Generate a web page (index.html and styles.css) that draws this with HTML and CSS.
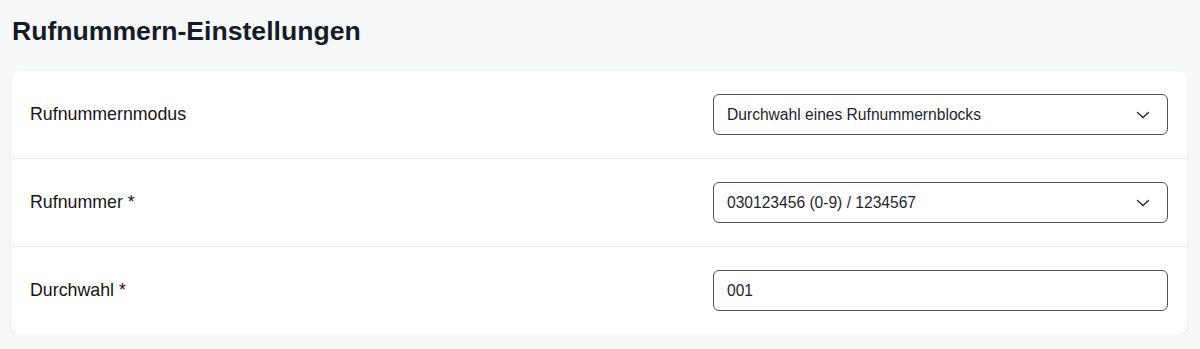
FILE: index.html
```html
<!DOCTYPE html>
<html lang="de">
  <head>
    <meta charset="UTF-8" />
    <meta name="viewport" content="width=device-width, initial-scale=1.0" />
    <title>Rufnummern-Einstellungen</title>
    <link rel="stylesheet" href="styles.css">
  </head>
  <body>
    <div class="page">
      <h1>Rufnummern-Einstellungen</h1>
      <div class="card">
        <div class="row">
          <label class="label">Rufnummernmodus</label>
          <div class="select">
            <span>Durchwahl eines Rufnummernblocks</span>
            <svg class="chevron" viewBox="0 0 14 8" width="14" height="8"><path d="M1.5 1.5l5.5 5 5.5-5" fill="none" stroke="#1f2937" stroke-width="1.4" stroke-linecap="round" stroke-linejoin="round"/></svg>
          </div>
        </div>
        <div class="row">
          <label class="label">Rufnummer *</label>
          <div class="select">
            <span>030123456 (0-9) / 1234567</span>
            <svg class="chevron" viewBox="0 0 14 8" width="14" height="8"><path d="M1.5 1.5l5.5 5 5.5-5" fill="none" stroke="#1f2937" stroke-width="1.4" stroke-linecap="round" stroke-linejoin="round"/></svg>
          </div>
        </div>
        <div class="row">
          <label class="label">Durchwahl *</label>
          <input class="input" type="text" value="001">
        </div>
      </div>
    </div>
  </body>
</html>
```

FILE: styles.css
```css
body {
  margin: 0;
  font-family: "Liberation Sans", Arial, sans-serif;
  background-color: #f7f8fa;
  color: #111;
}
.page {
  padding: 0 13px 0 11px;
}
h1 {
  margin: 0;
  padding: 15px 0 0 1px;
  height: 71px;
  box-sizing: border-box;
  font-size: 26.6px;
  line-height: 32px;
  font-weight: bold;
  color: #161b26;
}
.card {
  background-color: #fff;
  border-radius: 8px;
  box-shadow: 0 1px 3px rgba(0, 0, 0, 0.1);
}
.row {
  display: flex;
  justify-content: space-between;
  align-items: center;
  padding: 23px 19px;
  border-bottom: 1px solid #e7e8eb;
}
.row:last-child {
  border-bottom: none;
}
.label {
  font-size: 17.8px;
  color: #151515;
}
.select,
.input {
  box-sizing: border-box;
  width: 455px;
  height: 41px;
  border: 1px solid #4b5160;
  border-radius: 6px;
  background-color: #fff;
  font-family: inherit;
  font-size: 15.6px;
  color: #1f2430;
}
.select {
  display: flex;
  justify-content: space-between;
  align-items: center;
  padding: 0 17px 0 13px;
}
.input {
  padding: 0 13px;
  outline: none;
}
```
